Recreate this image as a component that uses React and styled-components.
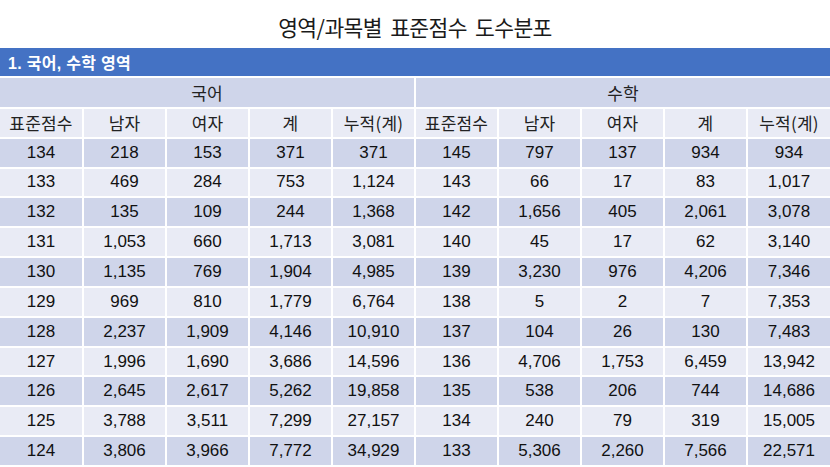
import React from 'react'
import styled, { createGlobalStyle } from 'styled-components';

const GlobalStyle = createGlobalStyle`
    html, body {
        margin: 0;
        padding: 0;
        background: #fff;
    }
    body {
        font-family: "Liberation Sans", "Noto Sans CJK KR", sans-serif;
        color: #000;
    }
`;

const Page = styled.div`
    width: 830px;
    height: 467px;
    overflow: hidden;
    display: flex;
    flex-direction: column;
`;

const Title = styled.h1`
    margin: 0;
    height: 49px;
    display: flex;
    align-items: center;
    justify-content: center;
    padding-top: 5px;
    box-sizing: border-box;
    font-family: "Noto Sans CJK KR", sans-serif;
    font-weight: 400;
    font-size: 21.5px;
    letter-spacing: -0.6px;
    word-spacing: 4px;
    color: #1a1a1a;
`;

const SectionBar = styled.div`
    height: 28px;
    background: #4472c4;
    color: #fff;
    display: flex;
    align-items: center;
    padding-left: 8px;
    font-family: "Liberation Sans", "Noto Sans CJK KR", sans-serif;
    font-weight: 700;
    font-size: 16px;
    letter-spacing: 0.3px;
    border-bottom: 2px solid #fff;
`;

const Table = styled.table`
    width: 830px;
    table-layout: fixed;
    border-collapse: collapse;
    font-size: 17px;
`;

const Row = styled.tr`
    height: 29.85px;
    background: ${p => (p.$light ? '#e9ebf5' : '#cfd5ea')};
`;

const Cell = styled.td`
    border: 2px solid #fff;
    padding: 0;
    text-align: center;
    vertical-align: middle;
    white-space: nowrap;
    font-family: ${p => (p.$ko ? '"Noto Sans CJK KR", sans-serif' : '"Liberation Sans", "Noto Sans CJK KR", sans-serif')};
    color: ${p => (p.$ko ? '#222' : '#111')};
    letter-spacing: ${p => (p.$ko ? '0.2px' : '0')};

    tr:first-child > & {
        border-top: none;
    }
    &:first-child {
        border-left: none;
    }
    &:last-child {
        border-right: none;
    }
`;

const headers = ['표준점수', '남자', '여자', '계', '누적(계)'];

const rows = [
    ['134', '218', '153', '371', '371', '145', '797', '137', '934', '934'],
    ['133', '469', '284', '753', '1,124', '143', '66', '17', '83', '1,017'],
    ['132', '135', '109', '244', '1,368', '142', '1,656', '405', '2,061', '3,078'],
    ['131', '1,053', '660', '1,713', '3,081', '140', '45', '17', '62', '3,140'],
    ['130', '1,135', '769', '1,904', '4,985', '139', '3,230', '976', '4,206', '7,346'],
    ['129', '969', '810', '1,779', '6,764', '138', '5', '2', '7', '7,353'],
    ['128', '2,237', '1,909', '4,146', '10,910', '137', '104', '26', '130', '7,483'],
    ['127', '1,996', '1,690', '3,686', '14,596', '136', '4,706', '1,753', '6,459', '13,942'],
    ['126', '2,645', '2,617', '5,262', '19,858', '135', '538', '206', '744', '14,686'],
    ['125', '3,788', '3,511', '7,299', '27,157', '134', '240', '79', '319', '15,005'],
    ['124', '3,806', '3,966', '7,772', '34,929', '133', '5,306', '2,260', '7,566', '22,571'],
];

const App = () => {
    return (
        <Page>
            <GlobalStyle />
            <Title>영역/과목별 표준점수 도수분포</Title>
            <SectionBar>1. 국어, 수학 영역</SectionBar>
            <Table>
                <tbody>
                    <Row>
                        <Cell $ko colSpan={5}>국어</Cell>
                        <Cell $ko colSpan={5}>수학</Cell>
                    </Row>
                    <Row $light>
                        {[...headers, ...headers].map((h, i) => (
                            <Cell $ko key={i}>{h}</Cell>
                        ))}
                    </Row>
                    {rows.map((r, i) => (
                        <Row key={i} $light={i % 2 === 1}>
                            {r.map((v, j) => (
                                <Cell key={j}>{v}</Cell>
                            ))}
                        </Row>
                    ))}
                </tbody>
            </Table>
        </Page>
    )
};

export default App;
